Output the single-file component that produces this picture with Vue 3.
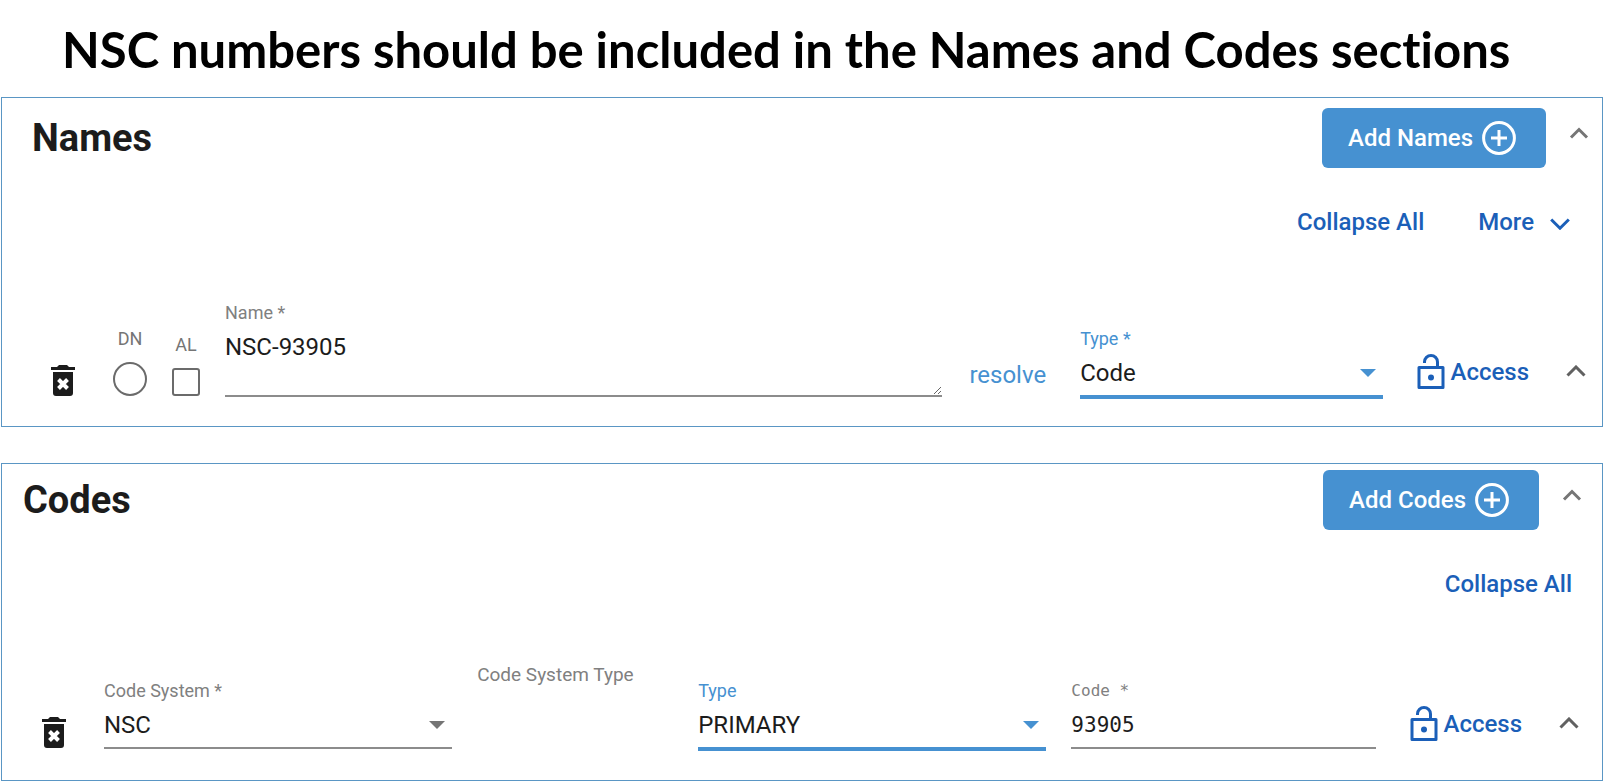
<script setup>
import { ref } from 'vue'

const nameText = ref('NSC-93905')
const nameType = ref('Code')
const codeSystem = ref('NSC')
const codeType = ref('PRIMARY')
const codeValue = ref('93905')
const displayName = ref(false)
const additionalListing = ref(false)
</script>

<template>
  <main class="page">
    <h1 class="title">NSC numbers should be included in the Names and Codes sections</h1>

    <section class="panel names">
      <header class="head">
        <h2>Names</h2>
        <button class="add" type="button">
          Add Names
          <svg class="plus" viewBox="0 0 34 34" aria-hidden="true"><circle cx="17" cy="17" r="15.4" /><path d="M17 9v16M9 17h16" /></svg>
        </button>
        <button class="icon toggle" type="button" aria-label="Collapse names">
          <svg class="chev" viewBox="0 0 20 12" aria-hidden="true"><path d="M2 10.5l8-8 8 8" /></svg>
        </button>
      </header>
      <div class="links">
        <button class="link" type="button">Collapse All</button>
        <button class="link more" type="button">
          More
          <svg class="chev" viewBox="0 0 20 12" aria-hidden="true"><path d="M1.2 1.5L10 10.2l8.800-8.700" /></svg>
        </button>
      </div>
      <div class="row">
        <button class="icon trash" type="button" aria-label="Delete name">
          <svg viewBox="0 0 24 31" aria-hidden="true"><path class="fill" d="M0 2h6l2-2h8l2 2h6v3H0zM2 7h20v21a3 3 0 0 1-3 3H5a3 3 0 0 1-3-3z" /><path class="cross" d="M7.500 14.500l9 9M16.500 14.500l-9 9" /></svg>
        </button>
        <label class="tick">DN<input v-model="displayName" class="radio" type="radio" name="dn" :value="true" /></label>
        <label class="tick">AL<input v-model="additionalListing" class="check" type="checkbox" /></label>
        <div class="field name">
          <label for="name">Name *</label>
          <textarea id="name" v-model="nameText" class="line" spellcheck="false"></textarea>
        </div>
        <a class="resolve" href="#">resolve</a>
        <div class="field type active">
          <label for="name-type">Type *</label>
          <div class="pick">
            <select id="name-type" v-model="nameType" class="line"><option>Code</option></select>
            <svg class="arrow" viewBox="0 0 16 8" aria-hidden="true"><path d="M0 0h16l-8 8z" /></svg>
          </div>
        </div>
        <button class="access" type="button">
          <svg viewBox="0 0 28 36" aria-hidden="true"><path d="M2 13.500h24v20H2zM7.500 9V8a6.500 6.500 0 0 1 13 0v5.500" /><circle cx="14" cy="23.500" r="3" /></svg>
          Access
        </button>
        <button class="icon fold" type="button" aria-label="Collapse row">
          <svg class="chev" viewBox="0 0 20 12" aria-hidden="true"><path d="M1.500 10.500L10 2l8.500 8.500" /></svg>
        </button>
      </div>
    </section>

    <section class="panel codes">
      <header class="head">
        <h2>Codes</h2>
        <button class="add" type="button">
          Add Codes
          <svg class="plus" viewBox="0 0 34 34" aria-hidden="true"><circle cx="17" cy="17" r="15.4" /><path d="M17 9v16M9 17h16" /></svg>
        </button>
        <button class="icon toggle" type="button" aria-label="Collapse codes">
          <svg class="chev" viewBox="0 0 20 12" aria-hidden="true"><path d="M2 10.5l8-8 8 8" /></svg>
        </button>
      </header>
      <div class="links">
        <button class="link" type="button">Collapse All</button>
      </div>
      <div class="row">
        <button class="icon trash" type="button" aria-label="Delete code">
          <svg viewBox="0 0 24 31" aria-hidden="true"><path class="fill" d="M0 2h6l2-2h8l2 2h6v3H0zM2 7h20v21a3 3 0 0 1-3 3H5a3 3 0 0 1-3-3z" /><path class="cross" d="M7.500 14.500l9 9M16.500 14.500l-9 9" /></svg>
        </button>
        <div class="fields">
          <div class="field system">
            <label for="code-system">Code System *</label>
            <div class="pick">
              <select id="code-system" v-model="codeSystem" class="line"><option>NSC</option></select>
              <svg class="arrow" viewBox="0 0 16 8" aria-hidden="true"><path d="M0 0h16l-8 8z" /></svg>
            </div>
          </div>
          <div class="system-type">Code System Type</div>
          <div class="field system active">
            <label for="code-type">Type</label>
            <div class="pick">
              <select id="code-type" v-model="codeType" class="line"><option>PRIMARY</option></select>
              <svg class="arrow" viewBox="0 0 16 8" aria-hidden="true"><path d="M0 0h16l-8 8z" /></svg>
            </div>
          </div>
          <div class="field code">
            <label for="code">Code *</label>
            <input id="code" v-model="codeValue" class="line" type="text" />
          </div>
        </div>
        <button class="access" type="button">
          <svg viewBox="0 0 28 36" aria-hidden="true"><path d="M2 13.500h24v20H2zM7.500 9V8a6.500 6.500 0 0 1 13 0v5.500" /><circle cx="14" cy="23.500" r="3" /></svg>
          Access
        </button>
        <button class="icon fold" type="button" aria-label="Collapse row">
          <svg class="chev" viewBox="0 0 20 12" aria-hidden="true"><path d="M1.500 10.500L10 2l8.500 8.500" /></svg>
        </button>
      </div>
    </section>
  </main>
</template>

<style>
body {
  margin: 0;
  background: #fff;
}
</style>

<style scoped>
.page {
  padding: 0 1px;
  font: 400 24px/28px Roboto, sans-serif;
  color: #1c1c1c;
}
.page *,
.page *::before {
  box-sizing: border-box;
}
button,
input,
select,
textarea {
  margin: 0;
  padding: 0;
  border: 0;
  border-radius: 0;
  background: none;
  font: inherit;
  color: inherit;
  outline: 0;
}
svg {
  display: block;
  flex: none;
}
.title {
  margin: 0;
  padding: 19px 0 18px 61px;
  font: 700 49px/60px Lato, sans-serif;
  font-variant-ligatures: none;
  color: #000;
  white-space: nowrap;
}
.panel {
  border: 1px solid #5a96c4;
}
.names {
  padding: 10px 16px 27px 30px;
}
.codes {
  margin-top: 36px;
  padding: 6px 23px 29px 21px;
}
.head {
  display: flex;
  align-items: center;
}
h2 {
  margin: 0 auto 0 0;
  font: 700 38px/46px Roboto, sans-serif;
}
.add {
  display: flex;
  align-items: center;
  gap: 9px;
  height: 60px;
  padding: 0 30px 0 26px;
  border-radius: 6px;
  background: #4691d1;
  font-weight: 500;
  color: #fff;
}
.plus {
  width: 34px;
  height: 34px;
  fill: none;
  stroke: #fff;
  stroke-width: 3;
}
.icon {
  flex: none;
}
.toggle {
  display: flex;
  align-items: center;
  align-self: flex-start;
  height: 50px;
  margin: 0 -3px 0 23px;
  color: #757575;
}
.chev {
  width: 20px;
  height: 12px;
  fill: none;
  stroke: currentColor;
  stroke-width: 3;
}
.links {
  display: flex;
  justify-content: flex-end;
  gap: 54px;
  margin-top: 40px;
  padding-right: 16px;
}
.codes .links {
  padding-right: 7px;
}
.link {
  font-weight: 500;
  color: #1b5fb8;
}
.more {
  display: flex;
  align-items: center;
  gap: 16px;
}
.more .chev {
  margin-top: 4px;
}
.row {
  display: flex;
  align-items: flex-end;
  margin: 66px 0 0 19px;
}
.trash {
  margin-bottom: 3px;
}
.trash svg {
  width: 24px;
  height: 31px;
}
.fill {
  fill: #1c1c1c;
}
.cross {
  fill: none;
  stroke: #fff;
  stroke-width: 4;
}
.tick {
  display: flex;
  flex-direction: column;
  align-items: center;
  gap: 12px;
  margin: 0 0 3px 25px;
  font-size: 18px;
  line-height: 22px;
  color: #757575;
}
.trash + .tick {
  margin-left: 38px;
}
.radio,
.check {
  appearance: none;
  border: 2px solid #6b6b6b;
}
.radio {
  width: 34px;
  height: 34px;
  border-radius: 50%;
}
.check {
  width: 28px;
  height: 28px;
  border-radius: 3px;
}
.field {
  display: flex;
  flex-direction: column;
  gap: 9px;
  min-width: 0;
}
.field label,
.system-type {
  font-size: 18px;
  line-height: 22px;
  color: #808080;
}
.line {
  display: block;
  width: 100%;
  height: 38px;
  margin-bottom: 2px;
  padding-bottom: 8px;
  border-bottom: 2px solid #8c8c8c;
}
textarea.line {
  height: 64px;
  padding: 0;
  resize: vertical;
}
select {
  appearance: none;
}
.pick {
  position: relative;
}
.arrow {
  position: absolute;
  top: 10px;
  right: 7px;
  width: 16px;
  height: 8px;
  fill: #757575;
  pointer-events: none;
}
.field.active label {
  color: #4691d1;
}
.active .line {
  height: 40px;
  margin: 0;
  border-bottom: 4px solid #4691d1;
}
.active .arrow {
  fill: #4691d1;
}
.name {
  flex: 719;
  margin-left: 25px;
}
.type {
  flex: 304;
}
.resolve {
  margin: 0 34px 0 27px;
  padding-bottom: 10px;
  color: #4691d1;
  text-decoration: none;
}
.access {
  display: flex;
  align-items: center;
  gap: 5px;
  height: 54px;
  margin-left: 34px;
  font-weight: 500;
  color: #1b5fb8;
}
.access svg {
  width: 28px;
  height: 36px;
  fill: none;
  stroke: currentColor;
  stroke-width: 3;
  stroke-linejoin: round;
}
.access circle {
  fill: currentColor;
  stroke: none;
}
.fold {
  margin: 0 0 22px 37px;
  color: #616161;
}
.fields {
  display: flex;
  flex: 1;
  align-items: flex-end;
  gap: 25px;
  margin-left: 38px;
  min-width: 0;
}
.system {
  flex: 348;
}
.system-type {
  flex: 196;
  padding-bottom: 65px;
  font-size: 19px;
}
.code {
  flex: 305;
}
.code label {
  font-family: "DejaVu Sans Mono", monospace;
  font-size: 16px;
}
.code input {
  font-family: "DejaVu Sans Mono", monospace;
  font-size: 21px;
}
</style>
